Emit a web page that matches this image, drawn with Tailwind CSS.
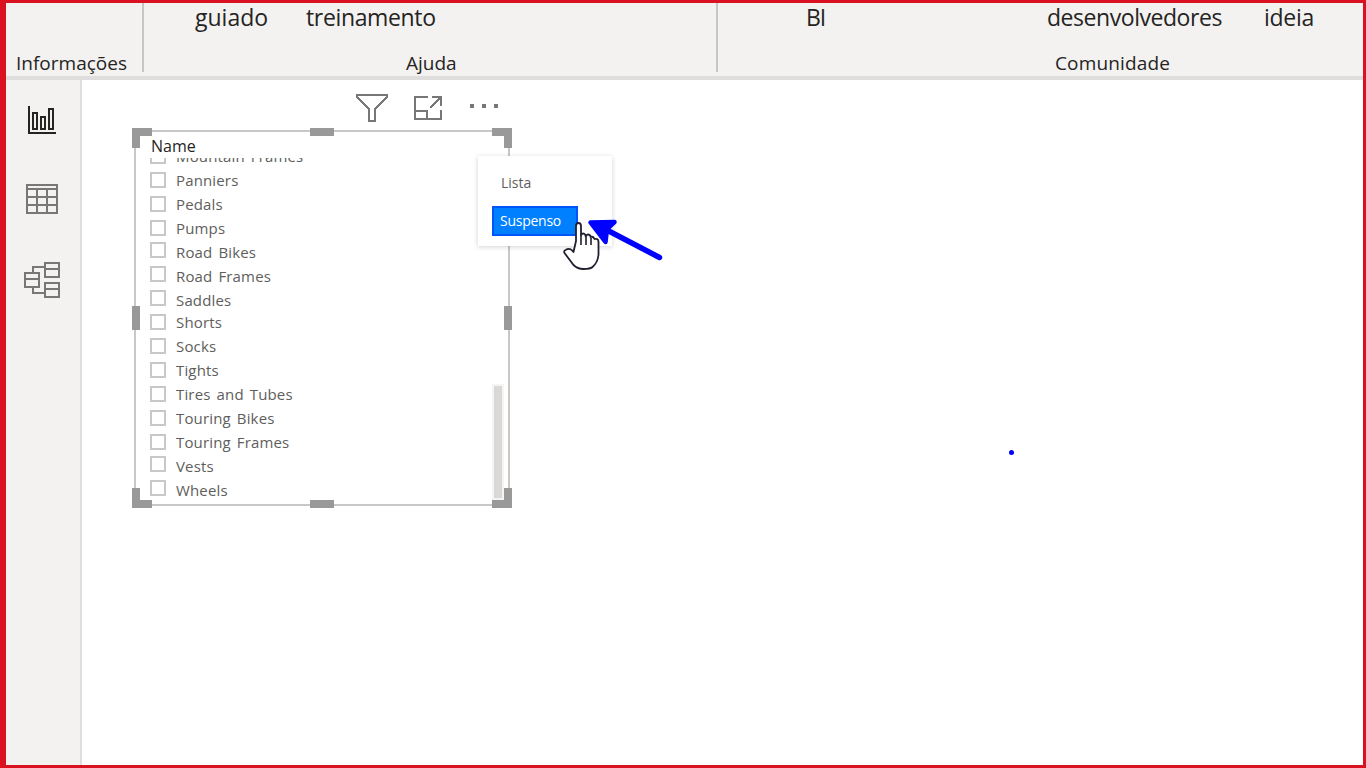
<!DOCTYPE html>
<html lang="pt-BR">
<head>
<meta charset="utf-8">
<title>Power BI</title>
<script src="https://cdn.jsdelivr.net/npm/@tailwindcss/browser@4"></script>
</head>
<body class="overflow-hidden">
<div class="relative flex h-[768px] w-[1366px] flex-col border-y-3 border-l-6 border-r-3 border-[#d91121] bg-white font-['Open_Sans',sans-serif] whitespace-nowrap">
  <!-- Ribbon -->
  <header class="flex h-[77px] shrink-0 border-b-4 border-[#dedede] bg-[#f3f2f0] text-[#252423]">
    <section class="flex h-[69px] w-[138px] flex-col justify-end border-r-2 border-[#c8c6c4] pl-[10px]">
      <div class="-mb-[3px] h-[23px] text-[19px] leading-[23px]">Informações</div>
    </section>
    <section class="flex h-[69px] w-[574px] flex-col justify-between border-r-2 border-[#c8c6c4]">
      <div class="flex h-[30px] text-[23px] leading-[28px]">
        <span class="ml-[51px] w-[111px]">guiado</span><span class="tracking-[-0.35px]">treinamento</span>
      </div>
      <div class="-mb-[3px] pl-[262px] text-[19px] leading-[23px]">Ajuda</div>
    </section>
    <section class="flex h-[69px] flex-1 flex-col justify-between">
      <div class="flex h-[30px] text-[23px] leading-[28px]">
        <span class="ml-[88px] w-[241px] tracking-[-1px]">BI</span><span class="w-[217px] tracking-[-0.45px]">desenvolvedores</span><span class="tracking-[-0.3px]">ideia</span>
      </div>
      <div class="-mb-[3px] pl-[337px] text-[19px] leading-[23px] tracking-[0.15px]">Comunidade</div>
    </section>
  </header>
  <div class="flex min-h-0 flex-1">
    <!-- View switcher -->
    <nav class="flex w-[76px] shrink-0 flex-col border-r-2 border-[#dedede] bg-[#f3f2f0] pt-[22px] pl-[16px]">
      <svg class="h-[36px] w-[40px]" viewBox="22 102 40 36" fill="none" stroke="#252423" stroke-width="2"><path d="M29 106V133H56M33 113h4v16h-4zM41 117h4v12h-4zM49 109h4v20h-4z"/></svg>
      <svg class="mt-[42px] h-[38px] w-[40px]" viewBox="22 180 40 38" fill="none" stroke="#797775" stroke-width="2"><path d="M27 185h30v28H27zM27 189h30M27 197h30M27 205h30M37 189v24M47 189v24"/></svg>
      <svg class="mt-[40px] h-[44px] w-[40px]" viewBox="22 258 40 44" fill="none" stroke="#797775" stroke-width="2"><path d="M45 263h14v14H45zM45 269h14M45 283h14v14H45zM45 289h14M25 273h14v14H25zM25 279h14M33 272v-5h11M33 288v5h11"/></svg>
    </nav>
    <main class="flex-1 pt-[10px] pl-[50px]">
      <div class="flex h-[38px] w-[380px] pl-[220px]">
        <svg class="h-[36px] w-[40px]" viewBox="352 90 40 36" fill="none" stroke="#797775" stroke-width="2" shape-rendering="crispEdges"><path d="M357 97V95h30v2L375 109v12h-6V109z"/></svg>
        <svg class="ml-[18px] h-[36px] w-[36px]" viewBox="410 90 36 36" fill="none" stroke="#797775" stroke-width="2" shape-rendering="crispEdges"><path d="M428 97H415v22h26v-9M415 111h12v8M432 97h9v9M441 97l-11 11"/></svg>
        <svg class="ml-[20px] h-[36px] w-[40px]" viewBox="466 90 40 36" fill="#797775"><path d="M470 104h4v4h-4zM482 104h4v4h-4zM494 104h4v4h-4z"/></svg>
      </div>
      <!-- Slicer visual -->
      <section class="relative h-[380px] w-[380px] p-[2px]">
        <div class="flex h-[376px] w-[376px] flex-col border-2 border-[#c8c8c8] pl-[14px] text-[#605e5c]">
          <h2 class="h-[26px] shrink-0 pl-px text-[16px] leading-[28px] text-[#252423]">Name</h2>
          <div class="flex min-h-0 flex-1">
            <ul class="w-[342px] overflow-hidden text-[15px] leading-[24px] tracking-[0.15px] [word-spacing:2px]">
              <li class="-mt-[14px] flex h-[24px]"><i class="mt-[4px] mr-[10px] size-[16px] border-2 border-[#c8c8c8]"></i>Mountain Frames</li>
              <li class="flex h-[24px]"><i class="mt-[4px] mr-[10px] size-[16px] border-2 border-[#c8c8c8]"></i>Panniers</li>
              <li class="flex h-[24px]"><i class="mt-[4px] mr-[10px] size-[16px] border-2 border-[#c8c8c8]"></i>Pedals</li>
              <li class="flex h-[24px]"><i class="mt-[4px] mr-[10px] size-[16px] border-2 border-[#c8c8c8]"></i>Pumps</li>
              <li class="flex h-[24px]"><i class="mt-[2px] mr-[10px] size-[16px] border-2 border-[#c8c8c8]"></i>Road Bikes</li>
              <li class="flex h-[24px]"><i class="mt-[2px] mr-[10px] size-[16px] border-2 border-[#c8c8c8]"></i>Road Frames</li>
              <li class="flex h-[22px]"><i class="mt-[2px] mr-[10px] size-[16px] border-2 border-[#c8c8c8]"></i>Saddles</li>
              <li class="flex h-[24px]"><i class="mt-[4px] mr-[10px] size-[16px] border-2 border-[#c8c8c8]"></i>Shorts</li>
              <li class="flex h-[24px]"><i class="mt-[4px] mr-[10px] size-[16px] border-2 border-[#c8c8c8]"></i>Socks</li>
              <li class="flex h-[24px]"><i class="mt-[4px] mr-[10px] size-[16px] border-2 border-[#c8c8c8]"></i>Tights</li>
              <li class="flex h-[24px]"><i class="mt-[4px] mr-[10px] size-[16px] border-2 border-[#c8c8c8]"></i>Tires and Tubes</li>
              <li class="flex h-[24px]"><i class="mt-[4px] mr-[10px] size-[16px] border-2 border-[#c8c8c8]"></i>Touring Bikes</li>
              <li class="flex h-[24px]"><i class="mt-[4px] mr-[10px] size-[16px] border-2 border-[#c8c8c8]"></i>Touring Frames</li>
              <li class="flex h-[24px]"><i class="mt-[2px] mr-[10px] size-[16px] border-2 border-[#c8c8c8]"></i>Vests</li>
              <li class="flex h-[24px]"><i class="mt-[2px] mr-[10px] size-[16px] border-2 border-[#c8c8c8]"></i>Wheels</li>
            </ul>
            <div class="mt-[226px] h-[116px] w-[12px] border-2 border-[#f5f4f3] bg-[#d9d8d6]"></div>
          </div>
        </div>
        <!-- Resize handles -->
        <svg class="absolute inset-0" width="380" height="380" fill="#999"><path d="M0 0h20v8H8v12H0zM360 0h20v20h-8V8h-12zM0 360h8v12h12v8H0zM372 360h8v20h-20v-8h12zM178 0h24v8h-24zM178 372h24v8h-24zM0 178h8v24H0zM372 178h8v24h-8z"/></svg>
        <!-- Slicer type menu -->
        <div class="absolute top-[28px] left-[346px] h-[90px] w-[134px] bg-white pt-[14px] pl-[14px] text-[14px] shadow-[0_1px_5px_rgba(0,0,0,0.18)]">
          <div class="h-[36px] pl-[9px] leading-[26px] text-[#605e5c]">Lista</div>
          <div class="h-[30px] w-[86px] border-2 border-[#0055f8] bg-[#0080ff] pl-[6px] leading-[25px] tracking-[-0.25px] text-white">Suspenso</div>
        </div>
      </section>
    </main>
  </div>
  <!-- Pointer and pen annotations -->
  <svg class="absolute -top-[3px] -left-[6px]" width="1366" height="768" fill="none">
    <path d="M576 241V226q0-3 2.500-3t2.500 3v9q2-3 4.500 0v1q3-3 5 0v1q3-1 4 2 4-1 4 3v13q-1 8-6 12-2 2-9 2-6 0-10-4l-9-12q-1-2 1-3 5-3 8 2z" fill="#fff" stroke="#202030" stroke-width="1.800" stroke-linejoin="round"/>
    <path d="M581 235v10M586 236v9M591 238v7" stroke="#202030" stroke-width="1.600"/>
    <path d="M659.500 257.500L603 228" stroke="#00f" stroke-width="5.500" stroke-linecap="round"/>
    <path d="M590.500 222.500L614.500 222L607 229L605.500 242z" fill="#00f" stroke="#00f" stroke-width="4.500" stroke-linejoin="round"/>
    <circle cx="1011.500" cy="452.500" r="2.500" fill="#00f"/>
  </svg>
</div>
</body>
</html>
